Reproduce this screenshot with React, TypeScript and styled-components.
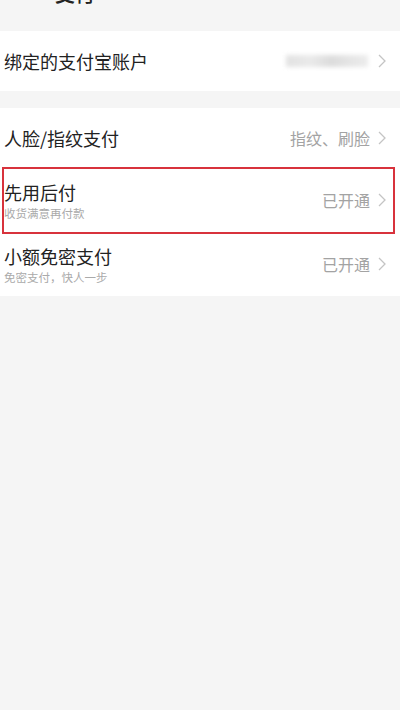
import React from 'react';
import styled, { createGlobalStyle } from 'styled-components';

const GlobalStyle = createGlobalStyle`
  html, body {
    margin: 0;
    padding: 0;
    background: #f5f5f5;
    font-family: "Noto Sans CJK SC", "Noto Sans", sans-serif;
  }
`;

const Page = styled.div`
  width: 400px;
  min-height: 710px;
  background: #f5f5f5;
  overflow: hidden;
`;

// title of the screen, scrolled mostly out of view
const Header = styled.div`
  height: 31px;
  overflow: hidden;
`;

const HeaderTitle = styled.div`
  margin-top: -20px;
  padding-left: 55px;
  font-size: 20px;
  line-height: 28px;
  color: #222;
  font-weight: 500;
`;

const Group = styled.div<{ $gap?: number }>`
  background: #fff;
  margin-bottom: ${p => p.$gap ?? 0}px;
`;

const Row = styled.div<{ $height: number; $highlight?: boolean }>`
  height: ${p => p.$height}px;
  display: flex;
  align-items: center;
  padding: 0 14px 0 4px;
  box-sizing: border-box;
  position: relative;
  ${p => p.$highlight && `
    &::after {
      content: '';
      position: absolute;
      left: 2px;
      right: 5px;
      top: -1px;
      bottom: -2px;
      border: 2px solid #d8323c;
      pointer-events: none;
    }
  `}
`;

const Labels = styled.div`
  flex: 1;
  display: flex;
  flex-direction: column;
`;

const Title = styled.div`
  font-size: 18px;
  line-height: 22px;
  color: #222;
`;

const Subtitle = styled.div`
  font-size: 11.5px;
  line-height: 14px;
  color: #aaa;
  margin-top: 3px;
`;

const Value = styled.div`
  font-size: 16px;
  color: #a3a3a3;
  margin-right: 8px;
`;

const Blurred = styled.div`
  width: 82px;
  height: 12px;
  margin-right: 10px;
  background: linear-gradient(90deg, #e2e2e2 0%, #eaeaea 30%, #dcdcdc 55%, #e6e6e6 80%, #ececec 100%);
  filter: blur(2px);
`;

const Chevron = () => (
  <svg width="8" height="14" viewBox="0 0 8 14">
    <path d="M1 1 L7 7 L1 13" fill="none" stroke="#c4c4c4" strokeWidth="1.3" />
  </svg>
);

export default function App() {
  return (
    <Page>
      <GlobalStyle />
      <Header>
        <HeaderTitle>支付</HeaderTitle>
      </Header>
      <Group $gap={17}>
        <Row $height={60}>
          <Labels>
            <Title>绑定的支付宝账户</Title>
          </Labels>
          <Blurred />
          <Chevron />
        </Row>
      </Group>
      <Group>
        <Row $height={60}>
          <Labels>
            <Title>人脸/指纹支付</Title>
          </Labels>
          <Value>指纹、刷脸</Value>
          <Chevron />
        </Row>
        <Row $height={64} $highlight>
          <Labels>
            <Title>先用后付</Title>
            <Subtitle>收货满意再付款</Subtitle>
          </Labels>
          <Value>已开通</Value>
          <Chevron />
        </Row>
        <Row $height={64}>
          <Labels>
            <Title>小额免密支付</Title>
            <Subtitle>免密支付，快人一步</Subtitle>
          </Labels>
          <Value>已开通</Value>
          <Chevron />
        </Row>
      </Group>
    </Page>
  );
}
